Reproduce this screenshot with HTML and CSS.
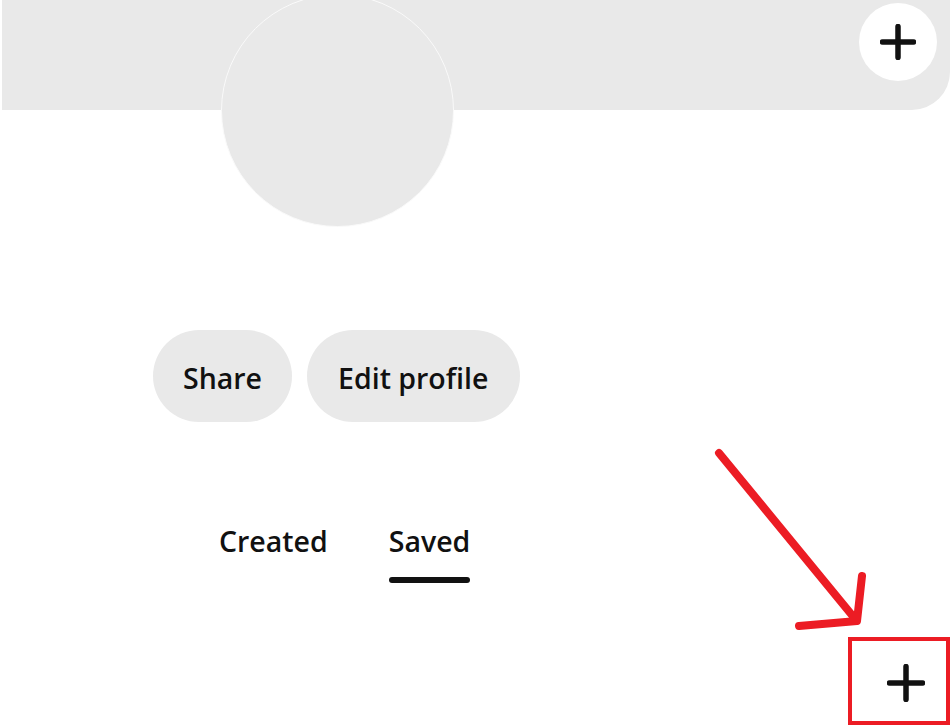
FILE: index.html
```html
<!DOCTYPE html>
<html lang="en">
<head>
<meta charset="utf-8">
<title>Profile</title>
<link rel="stylesheet" href="styles.css">
</head>
<body>
<div class="page">
  <header class="cover">
    <div class="banner">
      <button class="round-add" aria-label="Add">
        <svg class="plus" viewBox="0 0 36 36" width="36" height="36"><path d="M18 2.5V33.5M2.5 18H33.5"/></svg>
      </button>
    </div>
    <div class="avatar"></div>
  </header>

  <div class="actions">
    <button class="pill">Share</button>
    <button class="pill wide">Edit profile</button>
  </div>

  <nav class="tabs">
    <div class="tab">Created</div>
    <div class="tab active">Saved</div>
  </nav>

  <div class="fab-row">
    <button class="fab" aria-label="Create">
      <svg class="plus" viewBox="0 0 38 38" width="38" height="38"><path d="M19 2.5V35.5M2.5 19H35.5"/></svg>
    </button>
  </div>

  <svg class="annotation" viewBox="0 0 950 725" width="950" height="725">
    <path class="arrow" d="M719 453 L856 620 M862 576 L857 621 L799 626"/>
    <rect class="box" x="850" y="639" width="98" height="84"/>
  </svg>
</div>
</body>
</html>
```
FILE: styles.css
```css
* { box-sizing: border-box; }
html, body { margin: 0; padding: 0; background: #fff; }
body { font-family: "Open Sans", "Noto Sans", "DejaVu Sans", sans-serif; color: #111; }

.page {
  position: relative;
  width: 950px;
  height: 725px;
  overflow: hidden;
}

.cover { position: relative; }

.banner {
  height: 110px;
  margin-left: 2px;
  background: #e9e9e9;
  border-bottom-right-radius: 38px;
  display: flex;
  justify-content: flex-end;
  align-items: flex-start;
  padding: 3px 13px 0 0;
}

.round-add {
  width: 78px;
  height: 78px;
  border: none;
  border-radius: 50%;
  background: #fff;
  display: flex;
  align-items: center;
  justify-content: center;
  padding: 0;
  margin: 0;
}

.plus path {
  fill: none;
  stroke: #111;
  stroke-width: 5.5;
  stroke-linecap: round;
}

.avatar {
  position: absolute;
  left: 221px;
  top: -6px;
  width: 233px;
  height: 233px;
  border-radius: 50%;
  background: #e9e9e9;
  border: 1.5px solid #fafafa;
}

.actions {
  display: flex;
  gap: 15px;
  margin-top: 220px;
  padding-left: 153px;
}

.pill {
  height: 92px;
  padding: 0 30px;
  border: none;
  border-radius: 46px;
  background: #e9e9e9;
  font-family: inherit;
  font-size: 28.5px;
  font-weight: 600;
  color: #111;
  margin: 0;
  padding-top: 3px;
}

.pill.wide { padding-left: 31px; padding-right: 32px; }

.tabs {
  display: flex;
  gap: 61px;
  margin-top: 99px;
  padding-left: 219px;
}

.tab {
  font-size: 28.5px;
  font-weight: 600;
  line-height: 40px;
  padding-bottom: 22px;
  position: relative;
}

.tab.active::after {
  content: "";
  position: absolute;
  left: 0;
  right: 0;
  bottom: 0;
  height: 6px;
  border-radius: 3px;
  background: #111;
}

.fab-row {
  display: flex;
  justify-content: flex-end;
  padding: 81px 25px 0 0;
}

.fab {
  width: 38px;
  height: 38px;
  border: none;
  background: none;
  padding: 0;
  margin: 0;
}

.annotation {
  position: absolute;
  left: 0;
  top: 0;
  pointer-events: none;
}

.arrow {
  fill: none;
  stroke: #ec1c24;
  stroke-width: 8;
  stroke-linecap: round;
  stroke-linejoin: round;
}

.box {
  fill: none;
  stroke: #ec1c24;
  stroke-width: 4;
}
```
